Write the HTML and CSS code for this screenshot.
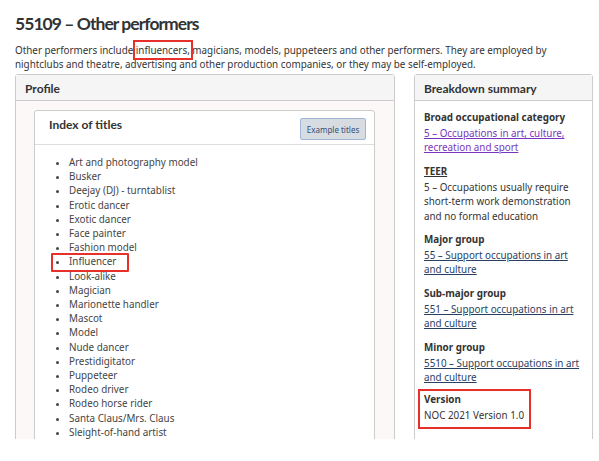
FILE: index.html
```html
<!DOCTYPE html>
<html lang="en">
<head>
<meta charset="utf-8">
<title>55109 – Other performers</title>
<link rel="stylesheet" href="styles.css">
</head>
<body>
<div class="page">
  <h1 class="title">55109 – Other performers</h1>
  <p class="intro">Other performers include <span class="mark">influencers,</span> magicians, models, puppeteers and other performers. They are employed by nightclubs and theatre, advertising and other production companies, or they may be self-employed.</p>
  <div class="columns">
    <section class="panel profile">
      <div class="panel-head">Profile</div>
      <div class="panel-body profile-body">
        <section class="panel inner">
          <div class="inner-head">
            <h2 class="inner-title">Index of titles</h2>
            <button class="btn">Example titles</button>
          </div>
          <ul class="titles">
            <li>Art and photography model</li>
            <li>Busker</li>
            <li>Deejay (DJ) - turntablist</li>
            <li>Erotic dancer</li>
            <li>Exotic dancer</li>
            <li>Face painter</li>
            <li>Fashion model</li>
            <li class="hl">Influencer</li>
            <li>Look-alike</li>
            <li>Magician</li>
            <li>Marionette handler</li>
            <li>Mascot</li>
            <li>Model</li>
            <li>Nude dancer</li>
            <li>Prestidigitator</li>
            <li>Puppeteer</li>
            <li>Rodeo driver</li>
            <li>Rodeo horse rider</li>
            <li>Santa Claus/Mrs. Claus</li>
            <li>Sleight-of-hand artist</li>
          </ul>
        </section>
      </div>
    </section>
    <section class="panel summary">
      <div class="panel-head">Breakdown summary</div>
      <div class="panel-body summary-body">
        <div class="group">
          <div class="label">Broad occupational category</div>
          <a class="link visited" href="#">5 – Occupations in art, culture, recreation and sport</a>
        </div>
        <div class="group">
          <div class="label"><u>TEER</u></div>
          <div class="text">5 – Occupations usually require short-term work demonstration and no formal education</div>
        </div>
        <div class="group">
          <div class="label">Major group</div>
          <a class="link" href="#">55 – Support occupations in art and culture</a>
        </div>
        <div class="group">
          <div class="label">Sub-major group</div>
          <a class="link" href="#">551 – Support occupations in art and culture</a>
        </div>
        <div class="group">
          <div class="label">Minor group</div>
          <a class="link" href="#">5510 – Support occupations in art and culture</a>
        </div>
        <div class="group version">
          <div class="label">Version</div>
          <div class="text">NOC 2021 Version 1.0</div>
        </div>
      </div>
    </section>
  </div>
</div>
</body>
</html>
```
FILE: styles.css
```css
* { box-sizing: border-box; }
html, body { margin: 0; padding: 0; background: #fff; }
body {
  font-family: "Noto Sans", "DejaVu Sans", sans-serif;
  color: #333;
  font-size: 9.85px;
}
.page {
  height: 439px;
  overflow: hidden;
  padding: 0 6px 0 15px;
}
.title {
  font-family: Lato, "Liberation Sans", sans-serif;
  font-weight: 700;
  font-size: 17.5px;
  letter-spacing: -0.95px;
  line-height: 24px;
  margin: 0;
  padding-top: 12px;
  color: #333;
}
.intro {
  margin: 7px 0 0 0;
  line-height: 14px;
}
.mark {
  outline: 2px solid #e8302a;
  outline-offset: 1px;
}
.columns {
  display: flex;
  gap: 19px;
  margin-top: 3px;
  align-items: flex-start;
}
.panel {
  border: 1px solid #ccc;
  border-radius: 3px;
  box-shadow: 0 1px 1px rgba(0,0,0,0.05);
}
.profile { width: 380px; }
.summary { width: 179px; }
.panel-head {
  background: #f5f5f5;
  border-bottom: 1px solid #ccc;
  height: 26px;
  line-height: 27px;
  padding: 0 9px;
  font-family: Lato, "Liberation Sans", sans-serif;
  font-weight: 700;
  font-size: 12px;
  color: #333;
}
.profile-body {
  background: #fdf8f8;
  padding: 9px 19px 0 18px;
  height: 400px;
}
.inner {
  background: #fff;
  height: 400px;
}
.inner-head {
  display: flex;
  justify-content: space-between;
  align-items: flex-start;
  border-bottom: 1px solid #ddd;
  height: 34px;
  padding: 7px 8px 0 14px;
}
.inner-title {
  font-family: Lato, "Liberation Sans", sans-serif;
  font-weight: 700;
  font-size: 12px;
  margin: 0;
  line-height: 14px;
  color: #333;
}
.btn {
  font-family: "Noto Sans", sans-serif;
  font-size: 8px;
  color: #335075;
  background: #d7dbe2;
  border: 1px solid #9fb6d5;
  border-radius: 2px;
  width: 66px;
  height: 22px;
  padding: 0;
  margin-top: 0;
}
.titles {
  margin: 0;
  padding: 10px 0 0 34px;
  list-style: disc;
  line-height: 14.2px;
  color: #444;
}
.titles li::marker { font-size: 9px; }
.hl { position: relative; }
.hl::before {
  content: "";
  position: absolute;
  left: -18px;
  top: -1px;
  width: 74px;
  height: 15px;
  border: 2px solid #e8302a;
  border-radius: 1px;
}
.summary-body {
  background: #fff;
  padding: 9px 9px 0 9px;
  height: 400px;
}
.group { margin-bottom: 9px; line-height: 14.4px; }
.label {
  font-weight: 700;
  color: #333;
  margin-bottom: 1.6px;
}
.label u { text-decoration: underline; }
.link { color: #284162; text-decoration: underline; }
.link.visited { color: #7834bc; }
.text { color: #333; }
.version {
  border: 2px solid #e8302a;
  margin-left: -6px;
  margin-top: -4.5px;
  padding: 1px 5px 5px 4px;
  width: fit-content;
  white-space: nowrap;
}
```
